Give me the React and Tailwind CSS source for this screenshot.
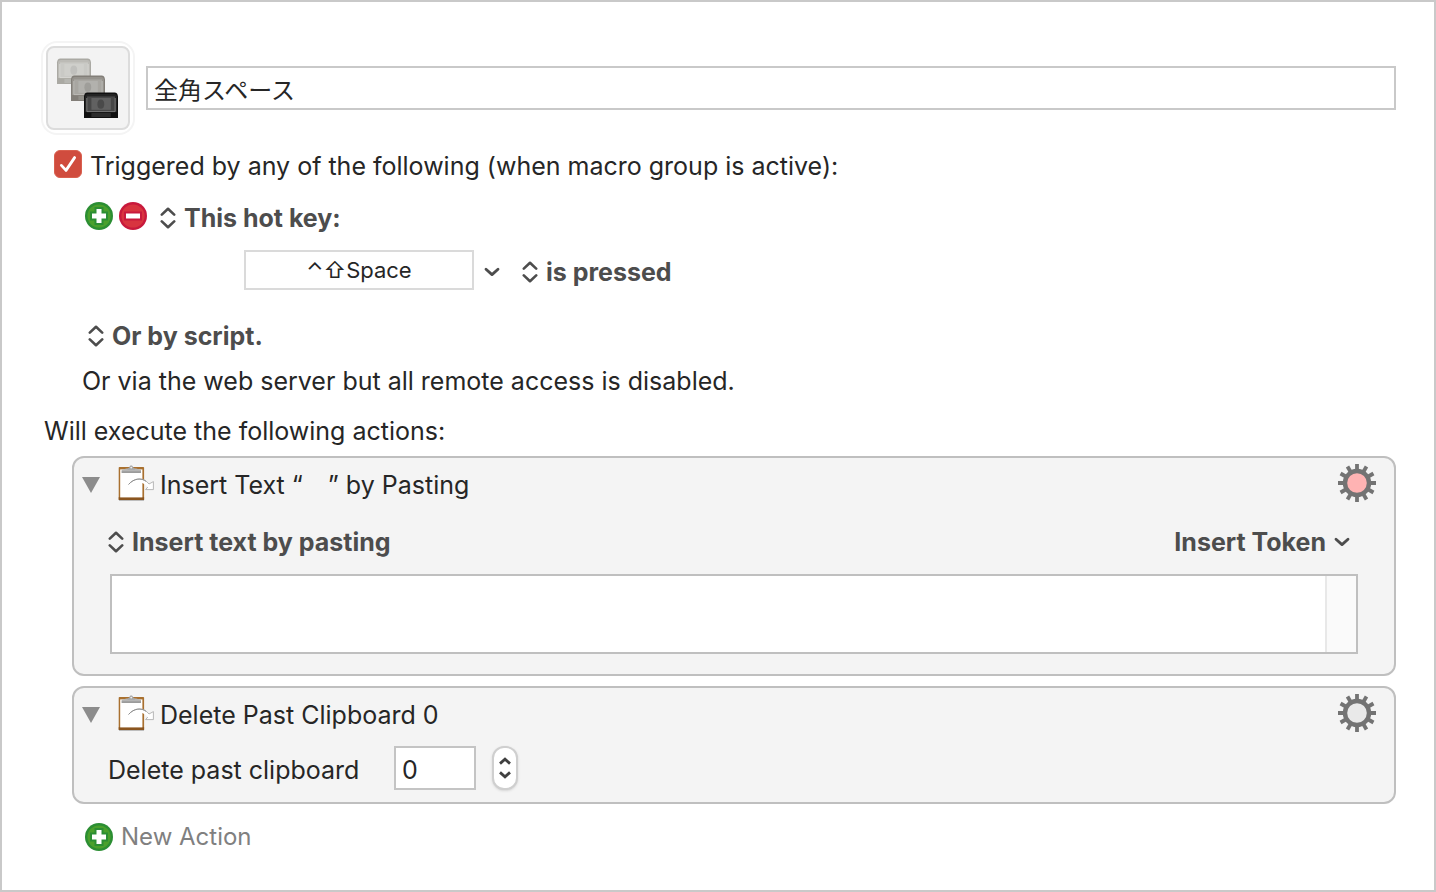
import React, { useState } from 'react';

// --- ICONS ---
function UpDown() {
  return (
    <svg width="16" height="22" viewBox="0 0 16 22" fill="none" stroke="#4d4d4d" strokeWidth="2.6" strokeLinecap="round" strokeLinejoin="round" className="shrink-0">
      <path d="M1.8 7.6 8 1.8l6.2 5.8M1.8 14.4 8 20.2l6.2-5.8" />
    </svg>
  );
}

function ChevronDown() {
  return (
    <svg width="16" height="10" viewBox="0 0 16 10" fill="none" stroke="#4d4d4d" strokeWidth="2.8" strokeLinecap="round" strokeLinejoin="round" className="shrink-0">
      <path d="M2 2.2 8 7.6l6-5.4" />
    </svg>
  );
}

function PlusIcon() {
  return (
    <svg width="28" height="28" viewBox="0 0 28 28" className="shrink-0">
      <circle cx="14" cy="14" r="14" fill="#2b8e33" />
      <circle cx="14" cy="14" r="11.6" fill="#4aa02c" />
      <path d="M14 5v18M5 14h18" stroke="#2b8e33" strokeWidth="9" />
      <path d="M14 7v14M7 14h14" stroke="#fff" strokeWidth="5" />
    </svg>
  );
}

function MinusIcon() {
  return (
    <svg width="28" height="28" viewBox="0 0 28 28" className="shrink-0">
      <circle cx="14" cy="14" r="14" fill="#c8193c" />
      <circle cx="14" cy="14" r="11.6" fill="#d8343f" />
      <path d="M5 14h18" stroke="#c8193c" strokeWidth="9" />
      <path d="M7 14h14" stroke="#fff" strokeWidth="5" />
    </svg>
  );
}

function Gear({ fill }) {
  const teeth = [0, 30, 60, 90, 120, 150];
  return (
    <svg width="38" height="38" viewBox="-19 -19 38 38">
      {teeth.map((angle) => (
        <path key={angle} d="M0-19V19" stroke="#737373" strokeWidth="3.8" transform={`rotate(${angle})`} />
      ))}
      <circle r="12" fill={fill} stroke="#737373" strokeWidth="4.4" />
    </svg>
  );
}

function Clipboard() {
  return (
    <svg width="36" height="38" viewBox="0 0 36 38" fill="none" className="shrink-0">
      <path d="M1 34.6h25v1.4H1z" fill="#bdbdbd" />
      <rect x="0.7" y="2" width="25.4" height="33" rx="0.8" fill="#a9702f" />
      <path d="M.7 32.2h25.4V35H.7z" fill="#8a5520" />
      <path d="M2.2 4.4h22.2v28H2.2z" fill="#fff" />
      <path d="M3.6 7.2V4.8l5-1.2h9.4l5 1.2v2.4z" fill="#b5b5b5" />
      <path d="M3.6 7.2h19.4" stroke="#777" strokeWidth="1" />
      <path d="M9.6 4.8c0-1.6 1-1.8 1.6-2.2C11.6 1 12.2.4 13.2.4s1.7.6 2 2.2c.8.4 1.7.6 1.7 2.2z" fill="#a6a6a6" />
      <circle cx="13.2" cy="2.6" r="0.9" fill="#eee" />
      <path d="M10.6 19.4c5.8-6.8 15-7.4 20.4-.4l4.4-2.4v8h-7.8l2.2-2.6c-5-5.8-12.6-6.4-19.2-2.6z" fill="#fff" />
      <path d="M10.6 19.4c5.8-6.8 15-7.4 20.4-.4l4.4-2.4v8h-7.8l2.2-2.6" stroke="#b0b0b0" strokeWidth="0.9" strokeLinejoin="round" />
      <path d="M10.6 19.4c5.4-6.2 12.6-6.8 17.6-3" stroke="#8e8e8e" strokeWidth="1" />
    </svg>
  );
}

function Machine({ x, y, body, edge, panel, screen, dial, shine }) {
  return (
    <g transform={`translate(${x} ${y})`}>
      <path d="M0 26V4.6C.3 1.8 1.2.6 3.4.6h27.2c2.2 0 3.1 1.2 3.4 4V26z" fill={edge} />
      <path d="M1 20V5c.3-2.2 1-3 2.8-3h26.4c1.8 0 2.5.8 2.8 3v15z" fill={body} />
      <path d="M3 19.4V4.4h28v15z" fill={panel} />
      <rect x="7.4" y="6" width="19.4" height="11.8" fill={screen} />
      <ellipse cx="16.8" cy="12.2" rx="3.4" ry="4.6" fill={dial} />
      <path d="M2.8 6v13.6h28.4V6" stroke={shine} strokeWidth="0.8" fill="none" />
      <path d="M7.4 21h19.4v4H7.4z" fill={screen} opacity="0.35" />
    </g>
  );
}

function MacroIcon() {
  return (
    <svg width="80" height="80" viewBox="0 0 80 80">
      <Machine x="9" y="10" body="#bcbbb6" edge="#aaa9a3" panel="#c9c9c5" screen="#cfcfcb" dial="#c0c0bd" shine="#dcdcd8" />
      <Machine x="23" y="27" body="#96938d" edge="#827e78" panel="#a8a6a1" screen="#b2b1ad" dial="#9f9e9a" shine="#c4c3bf" />
      <Machine x="36" y="44" body="#242424" edge="#101010" panel="#474747" screen="#616161" dial="#4a4a4a" shine="#8d8d8d" />
    </svg>
  );
}

// --- SHARED PARTS ---
function Popup({ label, name }) {
  return (
    <span className="flex items-center gap-2">
      <UpDown />
      <select aria-label={name} className="appearance-none bg-transparent font-bold text-[#4d4d4d] outline-none">
        <option>{label}</option>
      </select>
    </span>
  );
}

function ActionCard({ title, gearFill, children }) {
  return (
    <section className="rounded-xl border-2 border-[#bfbfbf] bg-[#f4f4f4] pt-[10px]">
      <header className="flex h-8 items-center pr-[18px] pl-2">
        <button type="button" aria-label="Collapse action" className="mr-[18px] pt-0.5">
          <svg width="18" height="16" viewBox="0 0 18 16" className="block">
            <path d="M0 0h18L9 16z" fill="#8c8c8c" />
          </svg>
        </button>
        <Clipboard />
        <h2 className="ml-1.5 grow pt-0.5 whitespace-pre">{title}</h2>
        <button type="button" aria-label="Action options" className="pb-0.5">
          <Gear fill={gearFill} />
        </button>
      </header>
      {children}
    </section>
  );
}

// --- MAIN APP COMPONENT ---
export default function App() {
  const [name, setName] = useState('全角スペース');
  const [hotKey, setHotKey] = useState('⌃⇧Space');
  const [enabled, setEnabled] = useState(true);
  const [text, setText] = useState('\u3000');
  const [clip, setClip] = useState(0);

  return (
    <main className="min-h-screen border-2 border-[#c9c9c9] bg-white pt-[39px] pr-[38px] pb-9 pl-[39px] font-['Inter','Noto_Sans_CJK_JP',sans-serif] text-[25px] leading-8 text-[#262626]">
      <div className="flex items-center gap-[11px]">
        <button type="button" aria-label="Macro icon" className="shrink-0 rounded-2xl border-2 border-[#f4f4f4] bg-white p-[3px]">
          <span className="block rounded-lg border-2 border-[#dcdcdc] bg-[#f3f3f3]">
            <MacroIcon />
          </span>
        </button>
        <input
          aria-label="Macro name"
          value={name}
          onChange={(e) => setName(e.target.value)}
          className="h-11 min-w-0 grow border-2 border-[#c9c9c9] px-[6px] text-2xl outline-none"
        />
      </div>

      {/* TRIGGERS */}
      <label className="mt-[13px] flex h-8 items-center gap-2 pl-[13px]">
        <span className="relative size-7 shrink-0">
          <input
            type="checkbox"
            checked={enabled}
            onChange={(e) => setEnabled(e.target.checked)}
            className="peer block size-7 appearance-none rounded-md border border-[#c9c9c9] bg-white checked:border-[#d9604f] checked:bg-[#d04c3e]"
          />
          <svg viewBox="0 0 28 28" className="pointer-events-none absolute inset-0 hidden peer-checked:block">
            <path d="M7.4 15.4 12 20.4 20.6 7.6" fill="none" stroke="#fff" strokeWidth="2.8" strokeLinecap="round" strokeLinejoin="round" />
          </svg>
        </span>
        <span className="pt-1">Triggered by any of the following (when macro group is active):</span>
      </label>

      <div className="mt-5 flex h-8 items-center pl-11">
        <button type="button" aria-label="Add trigger" className="mr-[6px]">
          <PlusIcon />
        </button>
        <button type="button" aria-label="Remove trigger" className="mr-[13px]">
          <MinusIcon />
        </button>
        <div className="pt-1">
          <Popup name="Trigger type" label="This hot key:" />
        </div>
      </div>

      <div className="mt-[18px] flex h-10 items-center pl-[203px]">
        <input
          aria-label="Hot key"
          value={hotKey}
          onChange={(e) => setHotKey(e.target.value)}
          className="h-10 w-[230px] border-2 border-[#dadada] text-center text-[22px] outline-none"
        />
        <div className="flex items-center pt-1">
          <button type="button" aria-label="Hot key options" className="mr-[22px] ml-[10px]">
            <ChevronDown />
          </button>
          <Popup name="Hot key event" label="is pressed" />
        </div>
      </div>

      <div className="mt-[30px] flex h-8 items-center pl-[47px]">
        <Popup name="Script trigger" label="Or by script." />
      </div>
      <p className="mt-[13px] pl-[41px]">Or via the web server but all remote access is disabled.</p>

      {/* ACTIONS */}
      <p className="mt-[18px] pl-[3px]">Will execute the following actions:</p>
      <div className="mt-[9px] ml-[31px] flex flex-col gap-[10px]">
        <ActionCard title={'Insert Text “\u3000” by Pasting'} gearFill="#ffb3b3">
          <div className="mt-[26px] flex h-8 items-center justify-between pr-11 pl-[34px]">
            <Popup name="Insert mode" label="Insert text by pasting" />
            <button type="button" className="flex items-center gap-2 font-bold text-[#4d4d4d]">
              Insert Token
              <ChevronDown />
            </button>
          </div>
          <div className="mx-9 mt-4 mb-5 flex h-20 border-2 border-[#bfbfbf] bg-white">
            <textarea
              aria-label="Text to insert"
              value={text}
              onChange={(e) => setText(e.target.value)}
              className="grow resize-none px-2 outline-none"
            />
            <div className="w-[31px] border-l-2 border-[#e8e8e8] bg-[#fafafa]" />
          </div>
        </ActionCard>

        <ActionCard title="Delete Past Clipboard 0" gearFill="#e9e9e9">
          <div className="mt-4 mb-3 flex h-11 items-center pl-[34px]">
            <label htmlFor="clip" className="w-[286px] pt-1">Delete past clipboard</label>
            <input
              id="clip"
              value={clip}
              onChange={(e) => setClip(Number(e.target.value) || 0)}
              className="h-11 w-[82px] border-2 border-[#c4c4c4] bg-white px-[6px] pt-1 outline-none"
            />
            <div className="ml-4 flex h-11 w-[26px] flex-col justify-center gap-[6px] rounded-xl border-2 border-[#cfcfcf] bg-white shadow-sm">
              <button type="button" aria-label="Increase" onClick={() => setClip(clip + 1)} className="flex justify-center">
                <svg width="12" height="8" viewBox="0 0 12 8" fill="none" stroke="#404040" strokeWidth="2.8">
                  <path d="M1 6.6 6 2.2l5 4.4" />
                </svg>
              </button>
              <button type="button" aria-label="Decrease" onClick={() => setClip(Math.max(0, clip - 1))} className="flex justify-center">
                <svg width="12" height="8" viewBox="0 0 12 8" fill="none" stroke="#404040" strokeWidth="2.8">
                  <path d="M1 1.4 6 5.8l5-4.4" />
                </svg>
              </button>
            </div>
          </div>
        </ActionCard>
      </div>

      <button type="button" className="mt-[17px] ml-11 flex h-8 items-center gap-2 text-2xl text-[#808080]">
        <PlusIcon />
        New Action
      </button>
    </main>
  );
}
